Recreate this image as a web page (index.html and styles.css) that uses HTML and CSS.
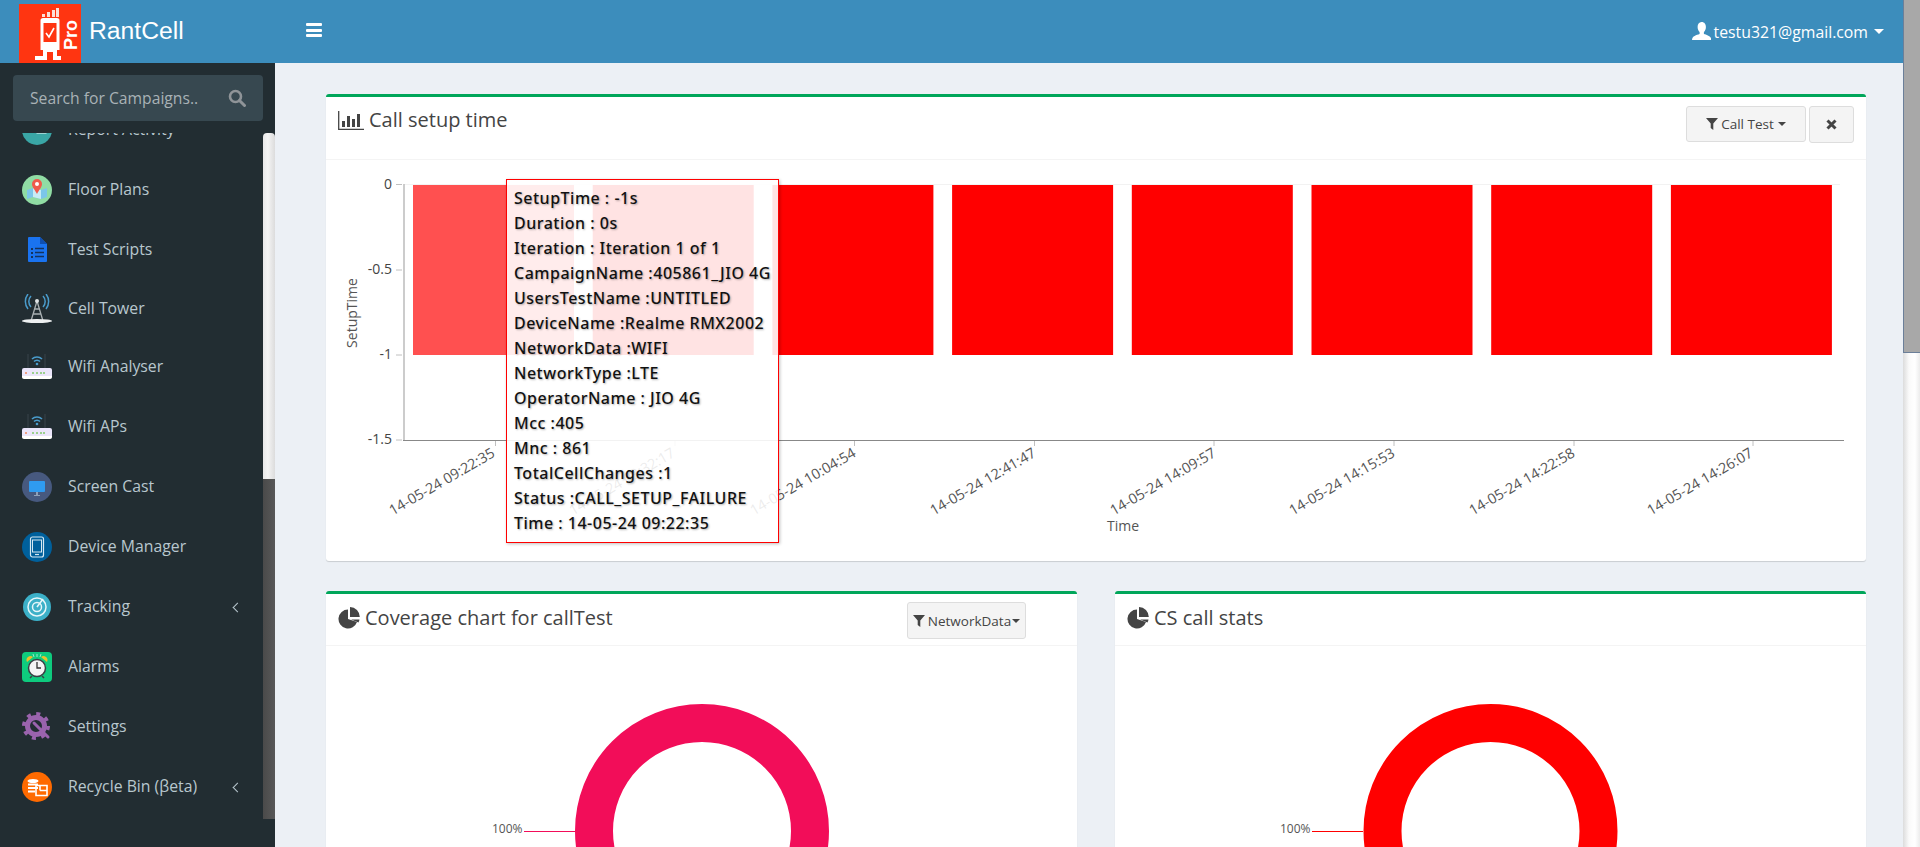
FILE: index.html
```html
<!DOCTYPE html>
<html lang="en">
<head>
<meta charset="utf-8">
<title>RantCell</title>
<link rel="stylesheet" href="styles.css">
</head>
<body>
<div class="app">
  <div class="page">
    <header class="topbar">
      <div class="brand">
        <svg class="logo" viewBox="0 0 62 59">
          <rect width="62" height="59" fill="#ff3511"/>
          <path d="M23 10h3v3h-3zM28 8h3v5h-3zM33 6h3v7h-3zM37 4h3v9h-3z" fill="#fbe0d8"/>
          <path d="M24 14h14a2.500 2.500 0 0 1 2.500 2.500V46H38v6h4v4h-8v-8h-6v8H16v-4h8v-6h-2.500V16.500A2.500 2.500 0 0 1 24 14z" fill="#fff"/>
          <rect x="24.500" y="19" width="13" height="19" fill="#ff3511"/>
          <path d="M27 29l3 4 5-9" fill="none" stroke="#fff" stroke-width="1.600"/>
          <text class="logo-pro" transform="translate(58 46) rotate(-90)">Pro</text>
        </svg>
        <span class="brand-name">RantCell</span>
      </div>
      <button class="burger" aria-label="Menu"><span></span><span></span><span></span></button>
      <div class="user">
        <svg class="user-icon" viewBox="0 0 19 18"><path d="M9.500 0c3 0 4.400 2.300 4.400 5 0 2.400-1 4-2 5v2c3 1 7.600 2 7.600 6H0c0-4 4.600-5 7.600-6v-2c-1-1-2-2.600-2-5 0-2.700 1.400-5 3.900-5z" fill="#fff"/></svg>
        <span class="user-mail">testu321@gmail.com</span>
        <i class="caret caret-user"></i>
      </div>
    </header>
    <div class="body">
      <aside class="sidebar">
        <div class="search">
          <span class="search-text">Search for Campaigns..</span>
          <svg class="search-icon" viewBox="0 0 18 18"><circle cx="7.500" cy="7.500" r="5.500" fill="none" stroke="#8f9498" stroke-width="2.600"/><path d="M11.500 11.500l5 5" stroke="#8f9498" stroke-width="3" stroke-linecap="round"/></svg>
        </div>
        <div class="side-scroll">
          <nav class="menu">
            <ul class="menu-list">
              <li class="item">
                <svg class="ico" viewBox="0 0 30 30"><circle cx="15" cy="15" r="15" fill="#3aa6a6"/><rect x="10" y="12" width="4" height="6" rx="2" fill="#fff"/><rect x="15" y="12" width="9" height="6" fill="none" stroke="#fff"/></svg>
                <span>Report Activity</span>
              </li>
              <li class="item">
                <svg class="ico" viewBox="0 0 30 30"><circle cx="15" cy="15" r="15" fill="#90dca4"/><path d="M5 15l6-2 8 2 6-2v9l-6 2-8-2-6 2z" fill="#7cc6ea"/><path d="M11 13l8 2v9l-8-2z" fill="#c8ecf5"/><path d="M15 4a5 5 0 0 1 5 5c0 3-3 6-5 10-2-4-5-7-5-10a5 5 0 0 1 5-5z" fill="#ef5a4c"/><circle cx="15" cy="9" r="2" fill="#fff"/></svg>
                <span>Floor Plans</span>
              </li>
              <li class="item">
                <svg class="ico" viewBox="0 0 30 30"><path d="M7 2h11l7 7v17a1 1 0 0 1-1 1H7a1 1 0 0 1-1-1V3a1 1 0 0 1 1-1z" fill="#1a73f0"/><path d="M18 2l7 7h-7z" fill="#0f4fb0"/><path d="M9 13h2v2H9zM9 17h2v2H9zM9 21h2v2H9z" fill="#14325c"/><path d="M13 13.500h9M13 17.500h9M13 21.500h9" stroke="#14325c" stroke-width="1.300"/></svg>
                <span>Test Scripts</span>
              </li>
              <li class="item item-up1">
                <svg class="ico" viewBox="0 0 30 30"><path d="M9 2a8 8 0 0 0 0 11M6 0a12 12 0 0 0 0 15M21 2a8 8 0 0 1 0 11M24 0a12 12 0 0 1 0 15" fill="none" stroke="#4a9ccc" stroke-width="1.500"/><path d="M15 7l-6 20M15 7l6 20M11 20h8M12 15h6" stroke="#a9b0b3" stroke-width="1.300" fill="none"/><circle cx="15" cy="7" r="2" fill="#dfe3e5"/><ellipse cx="15" cy="27" rx="15" ry="2" fill="#eef0f1"/></svg>
                <span>Cell Tower</span>
              </li>
              <li class="item item-up2">
                <svg class="ico" viewBox="0 0 30 30"><path d="M6 2v14M23 2v14" stroke="#38454b" stroke-width="1"/><path d="M10 7a7 7 0 0 1 10 0M12 9.500a4 4 0 0 1 6 0" fill="none" stroke="#4a9ccc" stroke-width="1.500"/><circle cx="15" cy="12" r="1.300" fill="#4a9ccc"/><rect y="16" width="30" height="10" rx="2" fill="#ebe6fb"/><path d="M0 24h30v1a2 2 0 0 1-2 2H2a2 2 0 0 1-2-2z" fill="#fff"/><circle cx="4" cy="21" r="1" fill="#f08a5d"/><path d="M10 20h2v2h-2zM14 20h2v2h-2zM18 20h2v2h-2zM21 20h2v2h-2z" fill="#9bd08e"/></svg>
                <span>Wifi Analyser</span>
              </li>
              <li class="item">
                <svg class="ico" viewBox="0 0 30 30"><path d="M6 2v14M23 2v14" stroke="#38454b" stroke-width="1"/><path d="M10 7a7 7 0 0 1 10 0M12 9.500a4 4 0 0 1 6 0" fill="none" stroke="#4a9ccc" stroke-width="1.500"/><circle cx="15" cy="12" r="1.300" fill="#4a9ccc"/><rect y="16" width="30" height="10" rx="2" fill="#ebe6fb"/><path d="M0 24h30v1a2 2 0 0 1-2 2H2a2 2 0 0 1-2-2z" fill="#fff"/><circle cx="4" cy="21" r="1" fill="#f08a5d"/><path d="M10 20h2v2h-2zM14 20h2v2h-2zM18 20h2v2h-2zM21 20h2v2h-2z" fill="#9bd08e"/></svg>
                <span>Wifi APs</span>
              </li>
              <li class="item">
                <svg class="ico" viewBox="0 0 30 30"><circle cx="15" cy="15" r="15" fill="#47597f"/><rect x="7" y="9" width="16" height="11" rx="1" fill="#2f9bf0"/><path d="M14 20h2v3h-2zM12 23h6v1h-6z" fill="#8fa0b8"/></svg>
                <span>Screen Cast</span>
              </li>
              <li class="item">
                <svg class="ico" viewBox="0 0 30 30"><circle cx="15" cy="15" r="15" fill="#00609c"/><rect x="8.500" y="5" width="13" height="20" rx="2" fill="none" stroke="#d6e8f2" stroke-width="1.200"/><rect x="10.500" y="8" width="9" height="12" fill="none" stroke="#d6e8f2"/><path d="M13 22.500h4" stroke="#d6e8f2" stroke-width="1.200"/></svg>
                <span>Device Manager</span>
              </li>
              <li class="item">
                <svg class="ico" viewBox="0 0 30 30"><circle cx="15" cy="15" r="14" fill="#3cb0c8"/><circle cx="15" cy="15" r="9" fill="none" stroke="#e6f6f9" stroke-width="1.500"/><circle cx="15" cy="15" r="4.500" fill="none" stroke="#e6f6f9" stroke-width="1.500"/><path d="M15 15l6-8" stroke="#e6f6f9" stroke-width="1.500"/></svg>
                <span>Tracking</span>
                <i class="chev"></i>
              </li>
              <li class="item">
                <svg class="ico" viewBox="0 0 30 30"><rect width="30" height="30" rx="4" fill="#0ecb7e"/><path d="M5 10a4 4 0 0 1 6-5zM25 10a4 4 0 0 0-6-5z" fill="#e9c02c"/><path d="M15 2v3M11 2l1 3M19 2l-1 3" stroke="#bfeedb" stroke-width=".8"/><circle cx="15" cy="16" r="8.500" fill="#f4f4f4" stroke="#3a3f44" stroke-width="1.500"/><path d="M15 10v6h4" stroke="#333" stroke-width="1.300" fill="none"/><path d="M8 26l2-2M22 26l-2-2" stroke="#3a3f44" stroke-width="1.500"/></svg>
                <span>Alarms</span>
              </li>
              <li class="item">
                <svg class="ico" viewBox="0 0 30 30"><circle cx="14" cy="14" r="8.500" fill="none" stroke="#9a63ad" stroke-width="5"/><circle cx="14" cy="14" r="12" fill="none" stroke="#9a63ad" stroke-width="4" stroke-dasharray="4 5.400"/><path d="M12 11l14 14" stroke="#9a63ad" stroke-width="3" stroke-linecap="round"/></svg>
                <span>Settings</span>
              </li>
              <li class="item">
                <svg class="ico" viewBox="0 0 30 30"><circle cx="15" cy="15" r="15" fill="#ff6a00"/><ellipse cx="11" cy="9" rx="5.500" ry="2" fill="#fff"/><path d="M6 12.500h10M6 16h10M6 19.500h7" stroke="#fff" stroke-width="2"/><path d="M14 13.500h11v10H14zM18 18.500h7M18 13.500v5" fill="none" stroke="#fff" stroke-width="1.600"/></svg>
                <span>Recycle Bin (βeta)</span>
                <i class="chev"></i>
              </li>
            </ul>
          </nav>
          <div class="side-bar">
            <div class="side-track"></div>
            <div class="side-thumb"></div>
          </div>
        </div>
      </aside>
      <main class="main">
        <section class="card card-wide">
          <div class="card-head">
            <h3 class="card-title">
              <svg class="title-ico title-ico-bar" viewBox="0 0 26 19"><path d="M0.700 0v18.300H26" fill="none" stroke="#444" stroke-width="1.300"/><path d="M4 10h3v6H4zM9 5h3v11H9zM14 8h3v8h-3zM19 3h3v13h-3z" fill="#444"/></svg>
              Call setup time
            </h3>
            <div class="card-tools">
              <button class="btn btn-filter">
                <svg class="filter-ico" viewBox="0 0 12 12"><path d="M0 0h12L7.300 5.500V12L4.700 10V5.500z" fill="#444"/></svg>
                Call Test<i class="caret"></i>
              </button>
              <button class="btn btn-close" aria-label="Close">
                <svg class="close-ico" viewBox="0 0 11 11"><path d="M1.500 1.500l8 8M9.500 1.500l-8 8" stroke="#444" stroke-width="3"/></svg>
              </button>
            </div>
          </div>
          <div class="chart">
            <svg class="bars" viewBox="0 0 1540 401" width="1540" height="401">
              <path d="M70 24.500h6M70 110h6M70 195h6M70 280h6" stroke="#c0c0c0"/>
              <path d="M78 24.500h1436" stroke="#f2f2f2"/>
              <rect x="87" y="25" width="161" height="170" fill="#ff5050"/>
              <rect x="266.700" y="25" width="161" height="170" fill="#f00"/>
              <rect x="446.400" y="25" width="161" height="170" fill="#f00"/>
              <rect x="626.100" y="25" width="161" height="170" fill="#f00"/>
              <rect x="805.800" y="25" width="161" height="170" fill="#f00"/>
              <rect x="985.500" y="25" width="161" height="170" fill="#f00"/>
              <rect x="1165.200" y="25" width="161" height="170" fill="#f00"/>
              <rect x="1344.900" y="25" width="161" height="170" fill="#f00"/>
              <path d="M78 24v256" stroke="#bbb" stroke-width="1.500"/>
              <path d="M77 280.500h1441" stroke="#888" stroke-width="1"/>
              <path d="M169.500 281v5M349 281v5M528.500 281v5M708.500 281v5M888 281v5M1068 281v5M1248 281v5M1427 281v5" stroke="#c0c0c0"/>
              <text class="y-label" x="66" y="29">0</text>
              <text class="y-label" x="66" y="114">-0.5</text>
              <text class="y-label" x="66" y="199">-1</text>
              <text class="y-label" x="66" y="284">-1.5</text>
              <text class="axis-title" transform="translate(31 153) rotate(-90)">SetupTime</text>
              <text class="x-label" transform="translate(170 296) rotate(-30)">14-05-24 09:22:35</text>
              <text class="x-label" transform="translate(350 296) rotate(-30)">14-05-24 09:32:17</text>
              <text class="x-label" transform="translate(531 296) rotate(-30)">14-05-24 10:04:54</text>
              <text class="x-label" transform="translate(711 296) rotate(-30)">14-05-24 12:41:47</text>
              <text class="x-label" transform="translate(891 296) rotate(-30)">14-05-24 14:09:57</text>
              <text class="x-label" transform="translate(1070 296) rotate(-30)">14-05-24 14:15:53</text>
              <text class="x-label" transform="translate(1250 296) rotate(-30)">14-05-24 14:22:58</text>
              <text class="x-label" transform="translate(1428 296) rotate(-30)">14-05-24 14:26:07</text>
              <text class="axis-title axis-title-x" x="797" y="371">Time</text>
            </svg>
            <div class="tooltip">
              <div>SetupTime : -1s</div>
              <div>Duration : 0s</div>
              <div>Iteration : Iteration 1 of 1</div>
              <div>CampaignName :405861_JIO 4G</div>
              <div>UsersTestName :UNTITLED</div>
              <div>DeviceName :Realme RMX2002</div>
              <div>NetworkData :WIFI</div>
              <div>NetworkType :LTE</div>
              <div>OperatorName : JIO 4G</div>
              <div>Mcc :405</div>
              <div>Mnc : 861</div>
              <div>TotalCellChanges :1</div>
              <div>Status :CALL_SETUP_FAILURE</div>
              <div>Time : 14-05-24 09:22:35</div>
            </div>
          </div>
        </section>
        <div class="card-row">
          <section class="card">
            <div class="card-head card-head-short">
              <h3 class="card-title">
                <svg class="title-ico" viewBox="0 0 22 22"><path d="M10 2.500a9.500 9.500 0 1 0 9 12.500l-9-3z" fill="#444"/><path d="M12 0a10 10 0 0 1 9.800 10H12z" fill="#444"/><path d="M13 12.500l8.500 0a10 10 0 0 1-1 3z" fill="#444"/></svg>
                Coverage chart for callTest
              </h3>
              <button class="btn btn-network">
                <svg class="filter-ico" viewBox="0 0 12 12"><path d="M0 0h12L7.300 5.500V12L4.700 10V5.500z" fill="#444"/></svg>
                NetworkData<i class="caret caret-tight"></i>
              </button>
            </div>
            <div class="donut-wrap">
              <svg class="donut" viewBox="0 0 751 400" width="751" height="400">
                <circle cx="376" cy="185" r="108" fill="none" stroke="#f20d59" stroke-width="38"/>
                <path d="M198 185.500h51" stroke="#f20d59" stroke-width="1.200"/>
                <text class="pct" x="166" y="187">100%</text>
              </svg>
            </div>
          </section>
          <section class="card">
            <div class="card-head card-head-short">
              <h3 class="card-title">
                <svg class="title-ico" viewBox="0 0 22 22"><path d="M10 2.500a9.500 9.500 0 1 0 9 12.500l-9-3z" fill="#444"/><path d="M12 0a10 10 0 0 1 9.800 10H12z" fill="#444"/><path d="M13 12.500l8.500 0a10 10 0 0 1-1 3z" fill="#444"/></svg>
                CS call stats
              </h3>
            </div>
            <div class="donut-wrap">
              <svg class="donut" viewBox="0 0 751 400" width="751" height="400">
                <circle cx="375.500" cy="185" r="108" fill="none" stroke="#f00" stroke-width="38"/>
                <path d="M197 185.500h51" stroke="#f00" stroke-width="1.200"/>
                <text class="pct" x="165" y="187">100%</text>
              </svg>
            </div>
          </section>
        </div>
      </main>
    </div>
  </div>
  <div class="page-scroll">
    <div class="page-thumb"></div>
    <div class="page-track"></div>
  </div>
</div>
</body>
</html>
```
FILE: styles.css
```css
* { box-sizing: border-box; }
html, body { margin: 0; height: 847px; overflow: hidden; }
body { font-family: "Open Sans", "Noto Sans", sans-serif; color: #444; background: #ecf0f5; }

.app { display: flex; width: 1920px; height: 847px; }
.page { flex: 1; display: flex; flex-direction: column; min-width: 0; }

/* browser scrollbar */
.page-scroll { flex: none; width: 17px; display: flex; flex-direction: column; }
.page-thumb { height: 353px; background: #a8a8a8; border-left: 1px solid #6b7f99; border-bottom: 1px solid #6b7f99; }
.page-track { flex: 1; background: linear-gradient(90deg, #dcdcdc, #fafafa 35%, #fff 70%, #ececec); }

/* top bar */
.topbar { flex: none; height: 63px; background: #3c8dbc; display: flex; align-items: stretch; color: #fff; }
.brand { width: 275px; display: flex; align-items: flex-end; padding-left: 19px; }
.logo { width: 62px; height: 59px; display: block; }
.logo-pro { font: bold 18px "Liberation Sans", sans-serif; fill: #fff; }
.brand-name { font: 24.700px/1 "Liberation Sans", sans-serif; margin: 0 0 19px 8px; }
.burger { border: 0; background: none; padding: 0; margin: 23px 0 0 31px; width: 16px; height: 14px; display: flex; flex-direction: column; justify-content: space-between; }
.burger span { display: block; height: 3px; background: #fff; border-radius: 1px; }
.user { margin-left: auto; display: flex; align-items: center; padding-right: 19px; }
.user-icon { width: 19px; height: 18px; margin: -2px 3px 0 0; }
.user-mail { font-size: 15.800px; }
.caret { display: inline-block; width: 0; height: 0; margin-left: 4px; border-top: 4px solid currentColor; border-left: 4px solid transparent; border-right: 4px solid transparent; vertical-align: middle; }
.caret-user { margin-left: 6px; border-top-width: 5px; border-left-width: 5px; border-right-width: 5px; }
.caret-tight { margin-left: 1px; }

.body { flex: 1; display: flex; min-height: 0; }

/* sidebar */
.sidebar { flex: none; width: 275px; background: #222d32; display: flex; flex-direction: column; overflow: hidden; }
.search { flex: none; height: 46px; margin: 12px 12px 12px 13px; background: #374850; border-radius: 4px; display: flex; align-items: center; justify-content: space-between; padding: 0 17px 0 17px; color: #a9b2b6; }
.search-text { font-size: 15.700px; }
.search-icon { width: 18px; height: 18px; }
.side-scroll { flex: 1; display: flex; min-height: 0; }
.menu { flex: none; width: 263px; height: 714px; overflow: hidden; }
.menu-list { list-style: none; margin: -33px 0 0; padding: 0; }
.item { height: 60px; display: flex; align-items: center; padding: 0 22px 0 22px; color: #b8c7ce; font-size: 15.800px; gap: 16px; }
.item span { margin-top: -2px; }
.item-up1 { margin-top: -1px; }
.item-up2 { margin-top: -2px; }
.ico { width: 30px; height: 30px; flex: none; }
.chev { margin-left: auto; width: 7px; height: 7px; border-left: 1.500px solid #b8c7ce; border-bottom: 1.500px solid #b8c7ce; transform: rotate(45deg); }
.side-bar { flex: none; width: 12px; height: 686px; display: flex; flex-direction: column; }
.side-track { height: 346px; background: linear-gradient(90deg, #e8e8e8, #f4f4f4 40%, #dcdcdc); border-radius: 4px 4px 0 0; }
.side-thumb { flex: 1; background: linear-gradient(90deg, #4a4a4a, #585858); }

/* main */
.main { flex: 1; min-width: 0; padding: 31px 37px 0 51px; display: flex; flex-direction: column; gap: 30px; overflow: hidden; }
.card { background: #fff; border-top: 3px solid #00a65a; border-radius: 3px; box-shadow: 0 1px 1px rgba(0, 0, 0, .15); flex: none; }
.card-wide { height: 467px; }
.card-head { height: 63px; border-bottom: 1px solid #f4f4f4; display: flex; align-items: flex-start; justify-content: space-between; padding: 0 12px; }
.card-head-short { height: 52px; }
.card-title { margin: 10px 0 0; font-size: 20px; font-weight: 400; line-height: 26px; display: flex; align-items: center; gap: 5px; color: #444; }
.card-head-short .card-title { margin-top: 11px; }
.title-ico { width: 22px; height: 22px; }
.title-ico-bar { width: 26px; height: 19px; }
.card-tools { display: flex; gap: 3px; margin-top: 9px; }
.btn { background: #f4f4f4; border: 1px solid #ddd; border-radius: 3px; color: #444; font: 13.500px "Open Sans", sans-serif; display: flex; align-items: center; justify-content: center; padding: 0; }
.btn-filter { width: 120px; height: 36px; }
.btn-close { width: 45px; height: 37px; }
.btn-network { width: 119px; height: 37px; margin: 8px 39px 0 0; }
.filter-ico { width: 12px; height: 12px; margin-right: 3px; }
.close-ico { width: 11px; height: 11px; }

.chart { position: relative; height: 401px; }
.bars { display: block; }
.y-label { font-size: 14px; fill: #444; text-anchor: end; }
.axis-title { font-size: 14px; fill: #555; text-anchor: middle; }
.x-label { font-size: 14.400px; fill: #555; text-anchor: end; }
.pct { font-size: 12px; fill: #555; }

.tooltip { position: absolute; left: 180px; top: 19px; width: 273px; height: 364px; border: 1px solid #f00; background: rgba(255, 255, 255, .89); box-shadow: 1px 1px 3px rgba(0, 0, 0, .25); padding: 6px 7px; font: 500 16px/25px "Noto Sans", sans-serif; letter-spacing: .5px; color: #111; text-shadow: 1px 1px 2px rgba(0, 0, 0, .3); white-space: nowrap; }

.card-row { display: grid; grid-template-columns: 751px 751px; gap: 38px; }
.donut-wrap { height: 400px; }
.donut { display: block; }
```
